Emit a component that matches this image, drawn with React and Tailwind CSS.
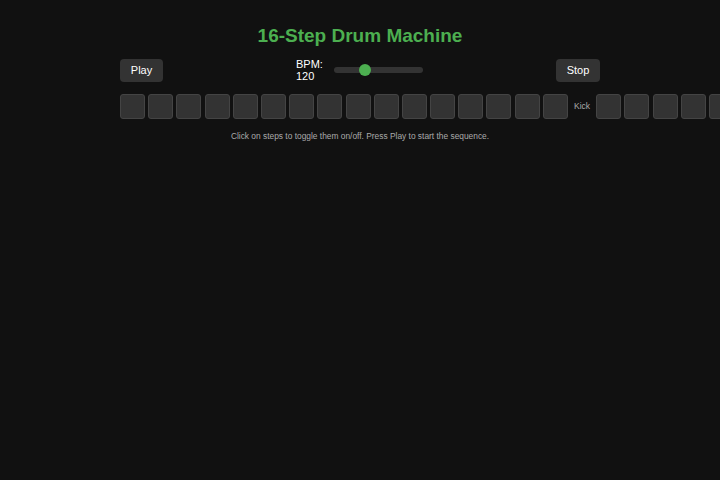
import React from "react";

const Step = () => (
  <div className="w-[25px] h-[25px] shrink-0 bg-[#333] border border-[#444] rounded-[3px]" />
);

export default function App() {
  const steps = Array.from({ length: 16 });
  return (
    <div className="min-h-[480px] w-full bg-[#111] text-white overflow-hidden" style={{ fontFamily: '"Liberation Sans", Arial, sans-serif' }}>
      <div className="w-[480px] mx-auto pt-[24px] flex flex-col">
        <h1 className="text-center text-[19px] leading-[24px] font-bold text-[#4caf50]">16-Step Drum Machine</h1>
        <div className="mt-[11px] flex items-center justify-between h-[22px]">
          <button className="h-[23px] w-[43px] bg-[#333] rounded-[4px] text-[11px] text-white">Play</button>
          <div className="flex items-center gap-[14px]">
            <div className="w-[24px] text-[11px] leading-[12px] text-white">BPM: 120</div>
            <div className="relative w-[89px] h-[6px] rounded-full bg-[#333]">
              <div className="absolute left-[25px] top-[-3px] w-[12px] h-[12px] rounded-full bg-[#4caf50]" />
            </div>
          </div>
          <button className="h-[23px] w-[44px] bg-[#333] rounded-[4px] text-[11px] text-white">Stop</button>
        </div>
        <div className="mt-[13px] flex items-center gap-[3.2px] w-max">
          {steps.map((_, i) => <Step key={"a" + i} />)}
          <div className="px-[3px] text-[8.5px] text-[#aaa]">Kick</div>
          {steps.map((_, i) => <Step key={"b" + i} />)}
        </div>
        <p className="mt-[11px] text-center text-[8.4px] text-[#aaa]">Click on steps to toggle them on/off. Press Play to start the sequence.</p>
      </div>
    </div>
  );
}
